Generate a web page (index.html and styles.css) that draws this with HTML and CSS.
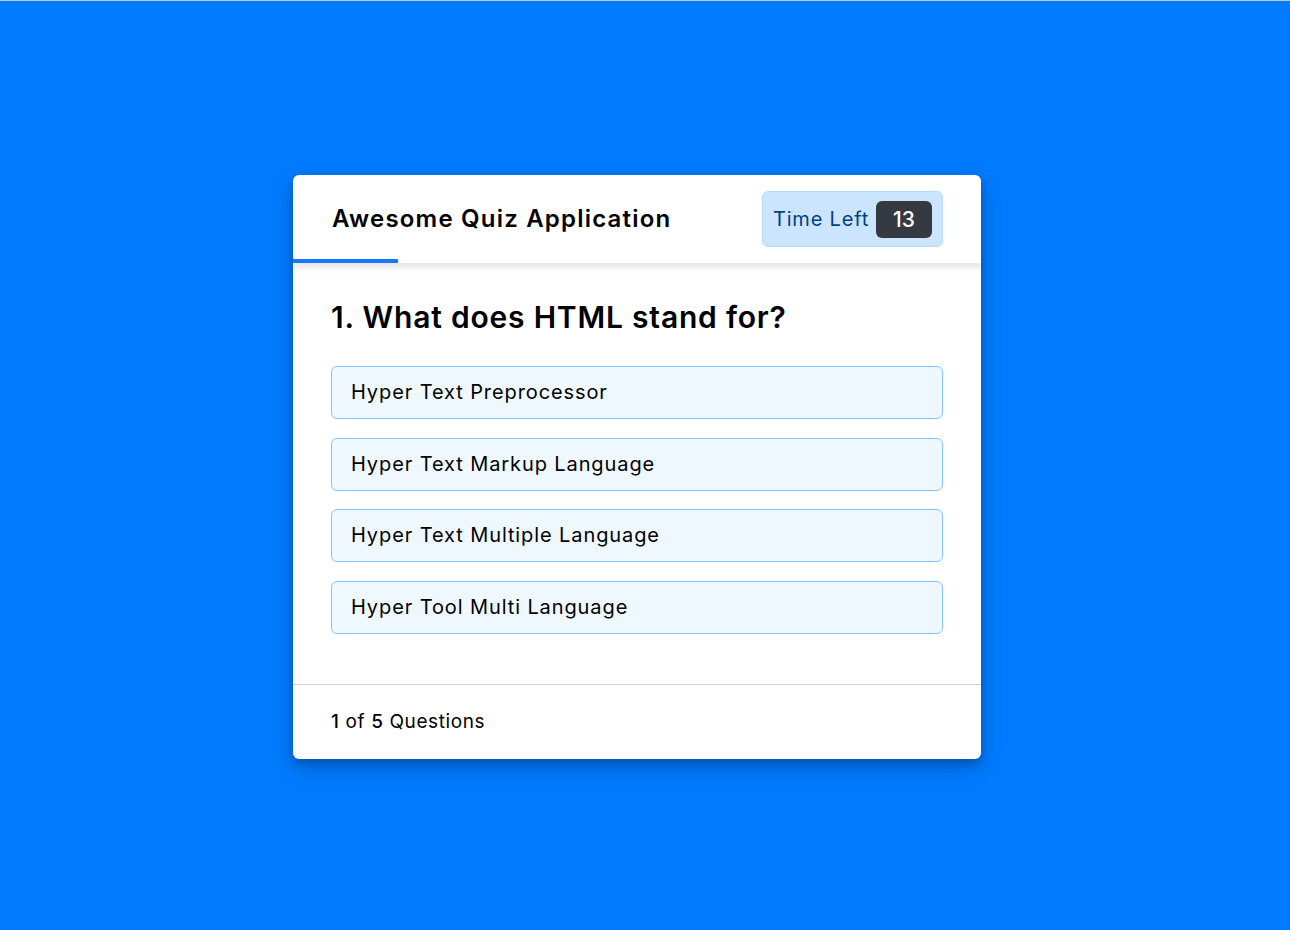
FILE: index.html
```html
<!DOCTYPE html>
<html lang="en">
<head>
<meta charset="utf-8">
<title>Awesome Quiz Application</title>
<link rel="stylesheet" href="styles.css">
</head>
<body>
<div class="page">
  <div class="quiz-box">
    <header class="quiz-header">
      <div class="title">Awesome Quiz Application</div>
      <div class="timer">
        <span class="time-left-txt">Time Left</span>
        <span class="timer-sec">13</span>
      </div>
      <div class="time-line"></div>
    </header>
    <section class="quiz-body">
      <div class="que-text">1. What does HTML stand for?</div>
      <div class="option-list">
        <div class="option">Hyper Text Preprocessor</div>
        <div class="option">Hyper Text Markup Language</div>
        <div class="option">Hyper Text Multiple Language</div>
        <div class="option">Hyper Tool Multi Language</div>
      </div>
    </section>
    <footer class="quiz-footer">
      <div class="total-que"><span class="num">1</span><span class="word">of</span><span class="num">5</span><span class="word">Questions</span></div>
    </footer>
  </div>
</div>
</body>
</html>
```

FILE: styles.css
```css
* { box-sizing: border-box; margin: 0; padding: 0; }
html, body { height: 100%; }
body {
  background: #007bff;
  font-family: Inter, "Noto Sans", sans-serif;
  color: #000;
  border-top: 1px solid #c4c4c4;
}
.page {
  height: 929px;
  display: flex;
  align-items: center;
  justify-content: center;
  padding-right: 16px;
  padding-top: 3px;
}
.quiz-box {
  width: 688px;
  background: #fff;
  border-radius: 6px;
  box-shadow: 0 5px 10px 0 rgba(0,0,0,0.2), 0 8px 25px 0 rgba(0,0,0,0.19);
  overflow: hidden;
}
.quiz-header {
  position: relative;
  height: 88px;
  padding: 0 38px 0 39px;
  display: flex;
  align-items: center;
  justify-content: space-between;
  box-shadow: 0 4px 6px 1px rgba(0,0,0,0.1);
  z-index: 1;
}
.title {
  font-size: 24px;
  font-weight: 600;
  letter-spacing: 1.2px;
  margin-top: -2px;
}
.timer {
  width: 181px;
  height: 56px;
  padding: 0 10px;
  display: flex;
  align-items: center;
  justify-content: space-between;
  color: #004085;
  background: #cce5ff;
  border: 1px solid #b8daff;
  border-radius: 6px;
}
.time-left-txt {
  font-size: 20px;
  font-weight: 400;
  letter-spacing: 0.8px;
}
.timer-sec {
  width: 56px;
  height: 37px;
  line-height: 37px;
  text-align: center;
  font-size: 21px;
  font-weight: 500;
  color: #fff;
  background: #343a40;
  border-radius: 6px;
}
.time-line {
  position: absolute;
  left: 0;
  bottom: 0;
  height: 4px;
  width: 105px;
  background: #1978ff;
}
.quiz-body {
  padding: 31px 38px 25px 38px;
}
.que-text {
  font-size: 30px;
  font-weight: 600;
  line-height: 47px;
  letter-spacing: 0.8px;
}
.option-list {
  padding: 25px 0;
  display: flex;
  flex-direction: column;
  gap: 18.67px;
}
.option {
  background: aliceblue;
  border: 1px solid #84c5fe;
  border-radius: 6px;
  padding: 10px 19px;
  font-size: 20px;
  line-height: 31px;
  letter-spacing: 0.9px;
}
.quiz-footer {
  height: 75px;
  padding: 0 38px;
  display: flex;
  align-items: center;
  border-top: 1px solid lightgrey;
}
.total-que {
  font-size: 19px;
  display: flex;
  letter-spacing: 0.6px;
}
.total-que .num { font-weight: 500; padding-right: 6px; }
.total-que .word { padding-right: 6px; }
```
